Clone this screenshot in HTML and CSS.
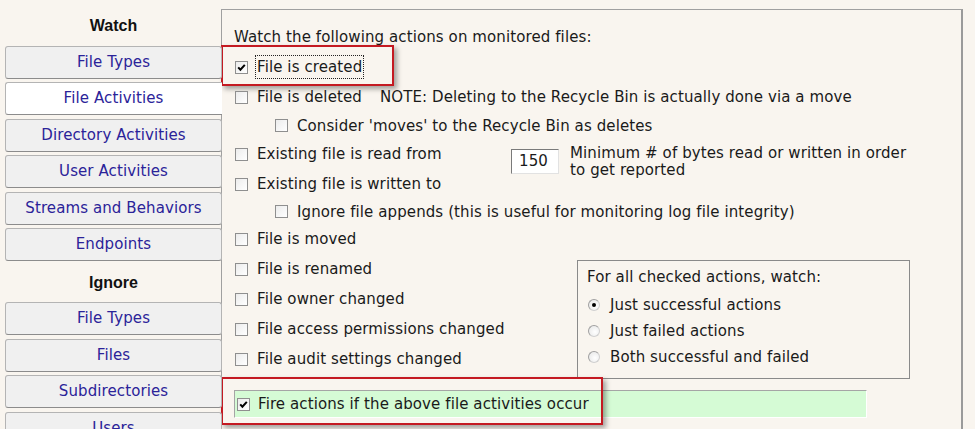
FILE: index.html
```html
<!DOCTYPE html>
<html>

<head>
    <title>File Activities</title>
    <link rel="stylesheet" href="styles.css">
</head>

<body>
    <!-- Side menu -->
    <div class="sidebar">
        <div class="side-title">Watch</div>
        <div class="side-btn">File Types</div>
        <div class="side-btn selected">File Activities</div>
        <div class="side-btn">Directory Activities</div>
        <div class="side-btn">User Activities</div>
        <div class="side-btn">Streams and Behaviors</div>
        <div class="side-btn">Endpoints</div>
        <div class="side-title">Ignore</div>
        <div class="side-btn">File Types</div>
        <div class="side-btn">Files</div>
        <div class="side-btn">Subdirectories</div>
        <div class="side-btn">Users</div>
    </div>

    <!-- Settings panel -->
    <div class="panel">
        <div class="row heading">Watch the following actions on monitored files:</div>

        <div class="row">
            <span class="check on"><svg viewBox="0 0 13 13"><path d="M2.6 6.4 L5.2 9.2 L10.4 3.4" fill="none" stroke="#000" stroke-width="2.4"/></svg></span>
            <span class="focus">File is created</span>
            <div class="callout callout-top"></div>
        </div>

        <div class="row">
            <span class="check"></span>
            <span>File is deleted</span>
            <span class="note">NOTE: Deleting to the Recycle Bin is actually done via a move</span>
        </div>

        <div class="row sub">
            <span class="check"></span>
            <span>Consider 'moves' to the Recycle Bin as deletes</span>
        </div>

        <div class="split">
            <div class="split-left">
                <div class="row">
                    <span class="check"></span>
                    <span>Existing file is read from</span>
                </div>
                <div class="row">
                    <span class="check"></span>
                    <span>Existing file is written to</span>
                </div>
            </div>
            <div class="bytes">
                <div class="num-box">150</div>
                <div class="bytes-text">Minimum # of bytes read or written in order<br>to get reported</div>
            </div>
        </div>

        <div class="row sub short">
            <span class="check"></span>
            <span>Ignore file appends (this is useful for monitoring log file integrity)</span>
        </div>

        <div class="split">
            <div class="split-left">
                <div class="row">
                    <span class="check"></span>
                    <span>File is moved</span>
                </div>
                <div class="row">
                    <span class="check"></span>
                    <span>File is renamed</span>
                </div>
                <div class="row">
                    <span class="check"></span>
                    <span>File owner changed</span>
                </div>
                <div class="row">
                    <span class="check"></span>
                    <span>File access permissions changed</span>
                </div>
                <div class="row">
                    <span class="check"></span>
                    <span>File audit settings changed</span>
                </div>
            </div>
            <div class="group">
                <div class="group-title">For all checked actions, watch:</div>
                <div class="radio-row"><span class="radio on"></span>Just successful actions</div>
                <div class="radio-row"><span class="radio"></span>Just failed actions</div>
                <div class="radio-row"><span class="radio"></span>Both successful and failed</div>
            </div>
        </div>

        <div class="fire">
            <span class="check on"><svg viewBox="0 0 13 13"><path d="M2.6 6.4 L5.2 9.2 L10.4 3.4" fill="none" stroke="#000" stroke-width="2.4"/></svg></span>
            <span>Fire actions if the above file activities occur</span>
            <div class="callout callout-bottom"></div>
        </div>
    </div>
</body>

</html>
```

FILE: styles.css
```css
/* Page */
body {
    margin: 0;
    padding: 0;
    background-color: #f9f5ef;
    font-family: "DejaVu Sans", Verdana, sans-serif;
    font-size: 15px;
    letter-spacing: 0.1px;
    color: #1a1a1a;
    display: flex;
    height: 429px;
    overflow: hidden;
}

/* Side menu */
.sidebar {
    width: 217px;
    padding: 8px 0 0 5px;
    flex-shrink: 0;
    position: relative;
    z-index: 1;
}

.side-title {
    height: 36px;
    line-height: 36px;
    margin-bottom: 1.5px;
    text-align: center;
    font-family: "Liberation Sans", Arial, sans-serif;
    font-weight: bold;
    font-size: 16px;
    letter-spacing: 0;
    color: #111;
}

.side-btn {
    height: 31px;
    line-height: 31px;
    margin-bottom: 3.5px;
    text-align: center;
    color: #2b2399;
    background-color: #f0f0f0;
    border: 1px solid #b4b4b4;
    border-bottom-color: #8c8c8c;
    border-radius: 3px;
    box-sizing: content-box;
}

.side-btn.selected {
    background-color: #ffffff;
    border-right: none;
    border-radius: 3px 0 0 3px;
    padding-right: 1px;
}

/* Settings panel */
.panel {
    margin: 9px 0 0 -1px;
    width: 727px;
    height: 440px;
    padding: 12px 0 0 12px;
    border-top: 1px solid #a0a0a0;
    border-left: 1px solid #a0a0a0;
    border-right: 2px solid #9a9a9a;
    flex-shrink: 0;
}

.row {
    height: 30px;
    display: flex;
    align-items: center;
    position: relative;
    white-space: nowrap;
}

.row.sub {
    height: 27px;
    padding-left: 40px;
}

.row.sub.short {
    height: 25px;
}

.check {
    width: 11px;
    height: 11px;
    border: 1px solid #8f8f8f;
    background: linear-gradient(135deg, #ececec, #ffffff);
    margin: 0 9px 0 1px;
    flex-shrink: 0;
    display: flex;
}

.check svg {
    width: 11px;
    height: 11px;
}

.focus {
    outline: 1px dotted #222;
    padding: 2px 1px;
    margin-left: -1px;
}

.note {
    margin-left: 18px;
}

/* Read / write byte threshold */
.split {
    display: flex;
}

.split-left {
    width: 277px;
    flex-shrink: 0;
}

.bytes {
    display: flex;
    align-items: flex-start;
}

.num-box {
    width: 39px;
    height: 23px;
    line-height: 23px;
    padding-left: 7px;
    margin-top: 10px;
    background-color: #fff;
    border: 1px solid #e2e2e2;
    border-top-color: #7a7a7a;
    border-left-color: #7a7a7a;
}

.bytes-text {
    margin: 6px 0 0 11px;
    line-height: 17px;
    white-space: nowrap;
}

/* Success / failure choice */
.split .group {
    margin: 36px 0 0 66px;
    width: 313px;
    height: 105px;
    padding: 5px 9px 7px;
    border: 1px solid #8a8a8a;
    white-space: nowrap;
}

.group-title {
    height: 22px;
    line-height: 22px;
    margin-bottom: 4px;
}

.radio-row {
    height: 26px;
    display: flex;
    align-items: center;
}

.radio {
    width: 10px;
    height: 10px;
    border: 1px solid #a0a0a0;
    border-bottom-color: #d0d0d0;
    border-right-color: #d0d0d0;
    border-radius: 50%;
    background: radial-gradient(circle at 60% 60%, #ffffff, #e4e4e4);
    margin: 0 10px 0 1px;
    position: relative;
}

.radio.on::after {
    content: "";
    position: absolute;
    left: 3px;
    top: 3px;
    width: 4px;
    height: 4px;
    border-radius: 50%;
    background-color: #000;
}

/* Fire actions bar */
.fire {
    margin-top: 11px;
    width: 629px;
    height: 26px;
    padding-left: 2px;
    display: flex;
    align-items: center;
    position: relative;
    background-color: #d5fbd5;
    border-top: 1px solid #a5a5a5;
    border-left: 1px solid #a5a5a5;
    border-bottom: 1px solid #fff;
    border-right: 1px solid #fff;
}

.fire .check {
    margin: 0 8px 0 0;
}

/* Red highlight boxes */
.callout {
    position: absolute;
    border: 2px solid #c41a22;
    box-shadow: 3px 3px 5px rgba(0, 0, 0, 0.35);
    pointer-events: none;
}

.callout-top {
    left: -13px;
    top: -7px;
    width: 169px;
    height: 37px;
}

.callout-bottom {
    left: -14px;
    top: -14px;
    width: 378px;
    height: 44px;
}
```
